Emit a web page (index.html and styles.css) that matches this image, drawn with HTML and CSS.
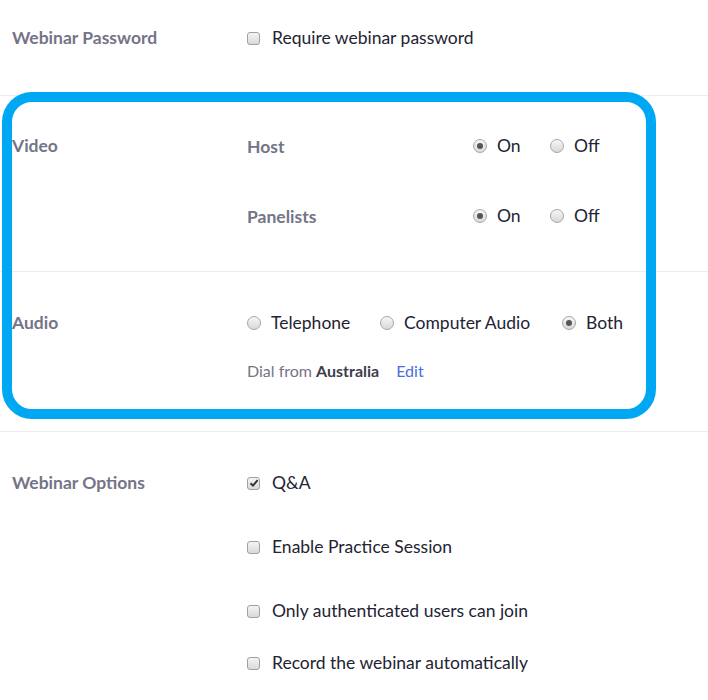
FILE: index.html
```html
<!DOCTYPE html>
<html>
<head>
<meta charset="utf-8">
<link rel="stylesheet" href="styles.css">
</head>
<body>
<div class="page">
  <section class="sec sec-pw">
    <div class="label">Webinar Password</div>
    <div class="content">
      <label class="opt"><span class="cb"></span>Require webinar password</label>
    </div>
  </section>
  <section class="sec sec-video">
    <div class="label">Video</div>
    <div class="content video-rows">
      <div class="vrow">
        <div class="sublabel">Host</div>
        <div class="radios">
          <label class="opt r-on"><span class="rd on"></span>On</label>
          <label class="opt"><span class="rd"></span>Off</label>
        </div>
      </div>
      <div class="vrow">
        <div class="sublabel">Panelists</div>
        <div class="radios">
          <label class="opt r-on"><span class="rd on"></span>On</label>
          <label class="opt"><span class="rd"></span>Off</label>
        </div>
      </div>
    </div>
  </section>
  <section class="sec sec-audio">
    <div class="label">Audio</div>
    <div class="content audio-rows">
      <div class="aradios">
        <label class="opt a-tel"><span class="rd"></span>Telephone</label>
        <label class="opt a-comp"><span class="rd"></span>Computer Audio</label>
        <label class="opt"><span class="rd on"></span>Both</label>
      </div>
      <div class="dial">Dial from <b>Australia</b><a class="edit">Edit</a></div>
    </div>
  </section>
  <section class="sec sec-opts">
    <div class="label">Webinar Options</div>
    <div class="content opts">
      <label class="opt"><span class="cb checked"><svg viewBox="0 0 10 10" width="10" height="10"><path d="M1.5 5.2 L4 7.6 L8.6 2.2" fill="none" stroke="#333" stroke-width="2"/></svg></span>Q&amp;A</label>
      <label class="opt"><span class="cb"></span>Enable Practice Session</label>
      <label class="opt"><span class="cb"></span>Only authenticated users can join</label>
      <label class="opt last"><span class="cb"></span>Record the webinar automatically</label>
    </div>
  </section>
  <div class="highlight"></div>
</div>
</body>
</html>
```

FILE: styles.css
```css
* { box-sizing: border-box; }
html, body { margin: 0; padding: 0; background: #fff; }
body {
  font-family: Lato, "Open Sans", sans-serif;
  color: #232333;
  font-size: 17.5px;
}
.page { position: relative; width: 708px; height: 700px; overflow: hidden; }
.sec {
  display: flex;
  border-bottom: 1px solid #ececec;
  padding-left: 12px;
}
.label {
  width: 235px;
  flex: none;
  font-weight: 700;
  color: #747487;
  line-height: 20px;
}
.content { flex: 1; }
.opt {
  display: flex;
  align-items: center;
  line-height: 20px;
  height: 20px;
}
.cb {
  width: 13px; height: 13px;
  border: 1px solid #a0a0a0;
  border-radius: 3px;
  background: linear-gradient(#f4f4f4, #dadada);
  margin-right: 12px;
  flex: none;
  display: flex; align-items: center; justify-content: center;
}
.rd {
  width: 14px; height: 14px;
  border: 1px solid #a6a6a6;
  border-radius: 50%;
  background: linear-gradient(#f6f6f6, #d8d8d8);
  margin-right: 10px;
  flex: none;
  display: flex; align-items: center; justify-content: center;
}
.rd.on::after {
  content: "";
  width: 6px; height: 6px;
  border-radius: 50%;
  background: #555;
}
.sec-pw { padding-top: 28px; padding-bottom: 47px; }
.sec-video { padding-top: 40px; padding-bottom: 45px; border-bottom: 1px solid #ececec; }
.video-rows { display: flex; flex-direction: column; gap: 50px; }
.vrow { display: flex; align-items: center; height: 20px; }
.sublabel { width: 226px; font-weight: 700; color: #747487; }
.radios { display: flex; }
.r-on { width: 77px; }
.sec-audio { padding-top: 41px; padding-bottom: 50px; }
.audio-rows { display: flex; flex-direction: column; gap: 28px; }
.aradios { display: flex; }
.a-tel { width: 133px; }
.a-comp { width: 182px; }
.dial { font-size: 16px; color: #747487; line-height: 20px; }
.dial b { color: #3d3d4e; font-weight: 700; }
.edit { color: #4a6ee0; margin-left: 17px; }
.sec-opts { padding-top: 41px; border-bottom: none; }
.opts { display: flex; flex-direction: column; gap: 44px; }
.opts .last { margin-top: -12px; }
.highlight {
  position: absolute;
  left: 2px; top: 92px;
  width: 654px; height: 327px;
  border: 10px solid #00a8f3;
  border-radius: 30px;
  pointer-events: none;
}
```
